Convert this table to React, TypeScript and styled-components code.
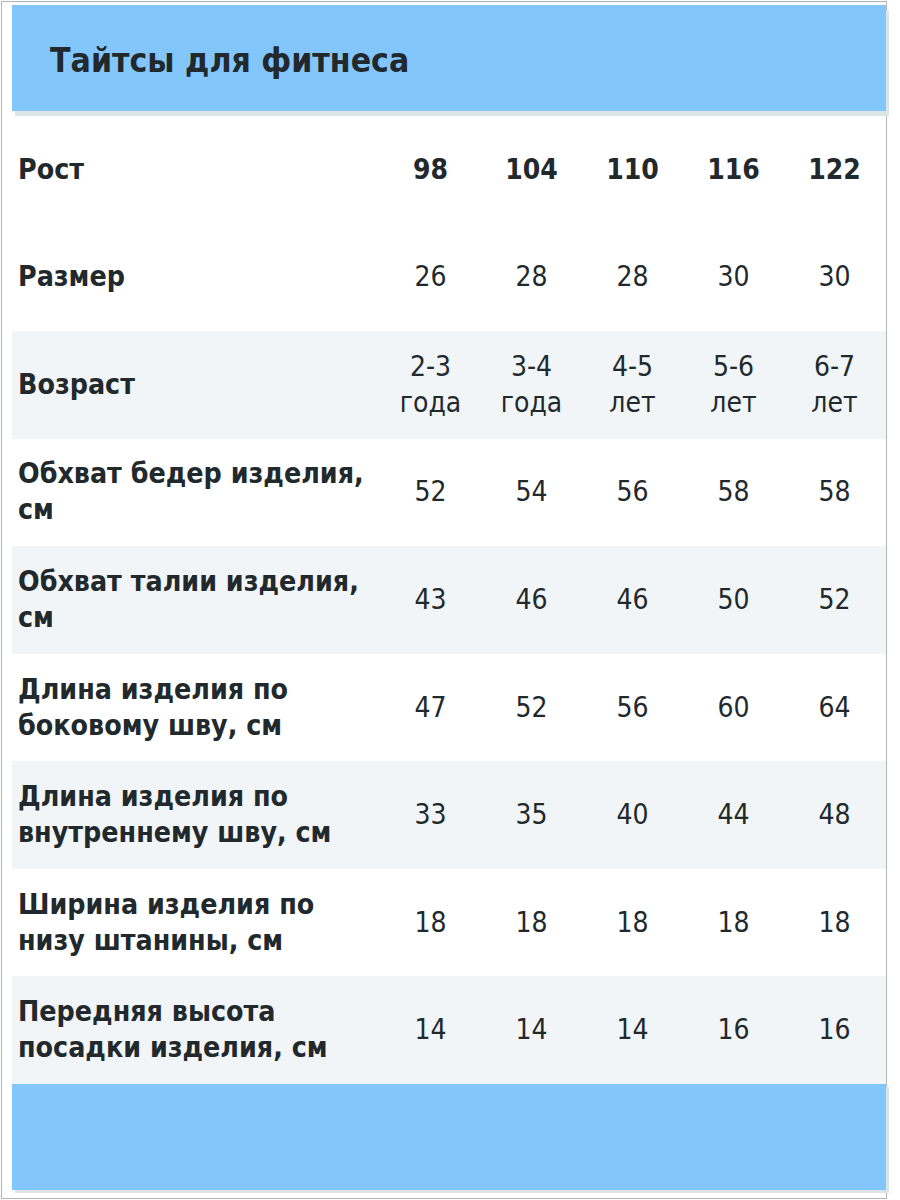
import styled, { createGlobalStyle } from "styled-components";

const GlobalStyle = createGlobalStyle`
  body {
    margin: 0;
    background: #ffffff;
  }
`;

const Frame = styled.div`
  box-sizing: border-box;
  width: 886px;
  height: 1198px;
  margin: 1px 0 0 1px;
  padding: 3px 0 4px 10px;
  border: 1px solid #b4b4b4;
  font-family: "DejaVu Sans Condensed", "DejaVu Sans", Verdana, sans-serif;
  font-stretch: condensed;
  color: #21292d;
`;

const BlueBar = styled.div`
  display: flex;
  align-items: center;
  height: 106px;
  margin-bottom: 5px;
  padding: 4px 0 0 38px;
  box-sizing: border-box;
  background: #83c6fc;
  box-shadow: 3px 5px 0 #dce5e5;
`;

const Title = styled.h1`
  margin: 0;
  font-size: 33.5px;
  font-weight: bold;
`;

const Row = styled.div<{ $shaded?: boolean }>`
  display: grid;
  grid-template-columns: 368px repeat(5, 101px);
  align-items: center;
  height: 107.55px;
  background: ${(p) => (p.$shaded ? "#f2f5f7" : "#ffffff")};
`;

const Label = styled.div`
  padding: 0 6px;
  font-size: 28.3px;
  font-weight: bold;
  line-height: 36px;
`;

const Value = styled.div<{ $bold?: boolean }>`
  text-align: center;
  font-size: 28px;
  font-weight: ${(p) => (p.$bold ? "bold" : "normal")};
  line-height: 36px;
`;

const FooterBar = styled.div`
  height: 106px;
  background: #83c6fc;
  box-shadow: 3px 3px 0 #dce5e5;
`;

const heights = ["98", "104", "110", "116", "122"];

const rows: { label: string; values: string[][] }[] = [
  { label: "Размер", values: [["26"], ["28"], ["28"], ["30"], ["30"]] },
  {
    label: "Возраст",
    values: [
      ["2-3", "года"],
      ["3-4", "года"],
      ["4-5", "лет"],
      ["5-6", "лет"],
      ["6-7", "лет"],
    ],
  },
  { label: "Обхват бедер изделия, см", values: [["52"], ["54"], ["56"], ["58"], ["58"]] },
  { label: "Обхват талии изделия, см", values: [["43"], ["46"], ["46"], ["50"], ["52"]] },
  { label: "Длина изделия по боковому шву, см", values: [["47"], ["52"], ["56"], ["60"], ["64"]] },
  { label: "Длина изделия по внутреннему шву, см", values: [["33"], ["35"], ["40"], ["44"], ["48"]] },
  { label: "Ширина изделия по низу штанины, см", values: [["18"], ["18"], ["18"], ["18"], ["18"]] },
  { label: "Передняя высота посадки изделия, см", values: [["14"], ["14"], ["14"], ["16"], ["16"]] },
];

function App() {
  return (
    <>
      <GlobalStyle />
      <Frame>
        <BlueBar>
          <Title>Тайтсы для фитнеса</Title>
        </BlueBar>

        <Row>
          <Label>Рост</Label>
          {heights.map((h) => (
            <Value key={h} $bold>
              {h}
            </Value>
          ))}
        </Row>

        {rows.map((row, i) => (
          <Row key={row.label} $shaded={i % 2 === 1}>
            <Label>{row.label}</Label>
            {row.values.map((lines, j) => (
              <Value key={j}>
                {lines.map((line, k) => (
                  <div key={k}>{line}</div>
                ))}
              </Value>
            ))}
          </Row>
        ))}

        <FooterBar />
      </Frame>
    </>
  );
}

export default App;
